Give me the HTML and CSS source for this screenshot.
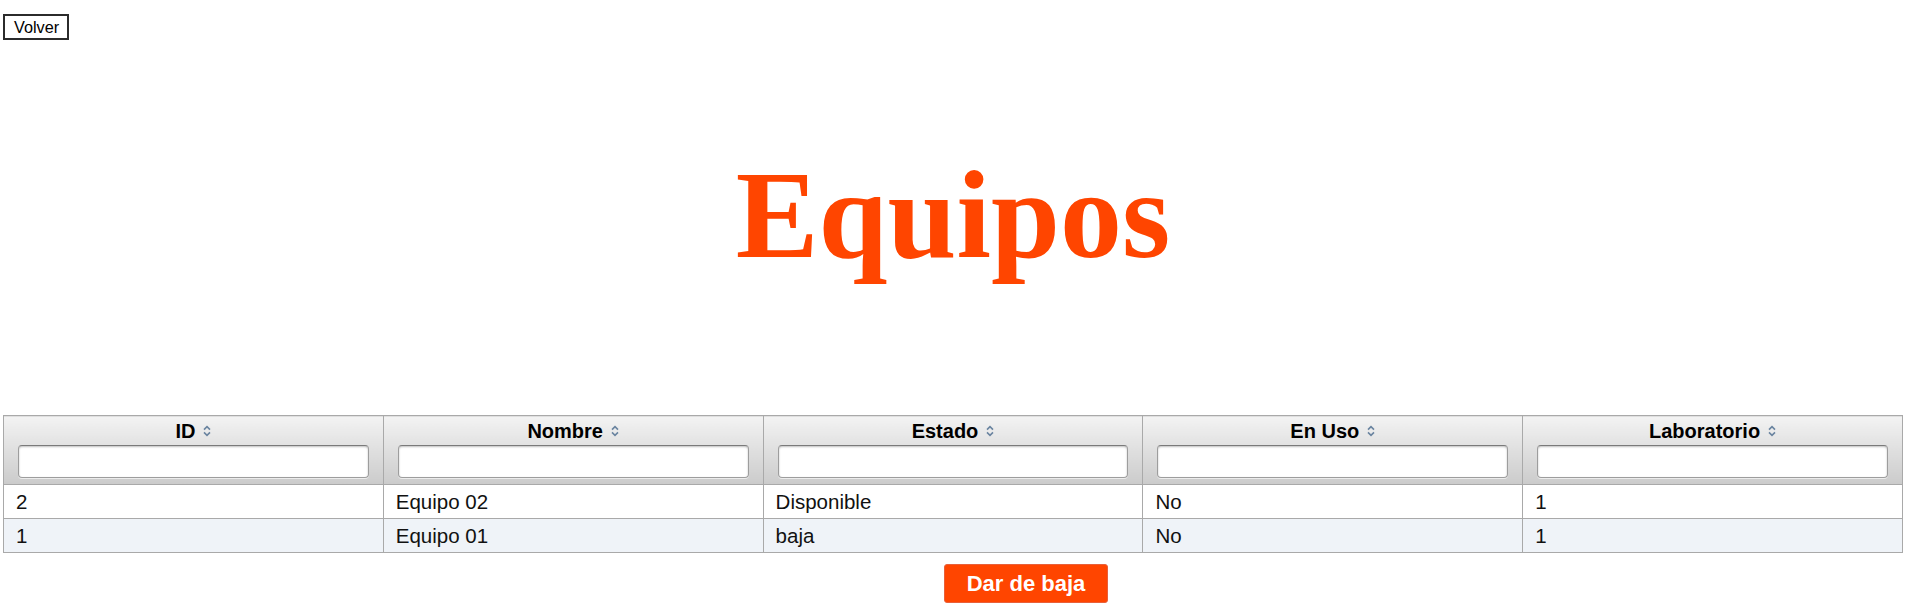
FILE: index.html
```html
<!DOCTYPE html>
<html lang="es">
<head>
<meta charset="utf-8">
<title>Equipos</title>
<link rel="stylesheet" href="styles.css">
</head>
<body>
<div class="page">
  <div class="top"><button class="back">Volver</button></div>
  <h1 class="title">Equipos</h1>
  <table class="grid">
    <thead>
      <tr>
        <th><div class="label">ID <svg class="sort" viewBox="0 0 8 12" width="8" height="12"><path d="M1 4.6 L4 1.6 L7 4.6 M1 7.4 L4 10.4 L7 7.4"/></svg></div><input type="text"></th>
        <th><div class="label">Nombre <svg class="sort" viewBox="0 0 8 12" width="8" height="12"><path d="M1 4.6 L4 1.6 L7 4.6 M1 7.4 L4 10.4 L7 7.4"/></svg></div><input type="text"></th>
        <th><div class="label">Estado <svg class="sort" viewBox="0 0 8 12" width="8" height="12"><path d="M1 4.6 L4 1.6 L7 4.6 M1 7.4 L4 10.4 L7 7.4"/></svg></div><input type="text"></th>
        <th><div class="label">En Uso <svg class="sort" viewBox="0 0 8 12" width="8" height="12"><path d="M1 4.6 L4 1.6 L7 4.6 M1 7.4 L4 10.4 L7 7.4"/></svg></div><input type="text"></th>
        <th><div class="label">Laboratorio <svg class="sort" viewBox="0 0 8 12" width="8" height="12"><path d="M1 4.6 L4 1.6 L7 4.6 M1 7.4 L4 10.4 L7 7.4"/></svg></div><input type="text"></th>
      </tr>
    </thead>
    <tbody>
      <tr><td>2</td><td>Equipo 02</td><td>Disponible</td><td>No</td><td>1</td></tr>
      <tr class="alt"><td>1</td><td>Equipo 01</td><td>baja</td><td>No</td><td>1</td></tr>
    </tbody>
  </table>
  <div class="actions"><button class="danger">Dar de baja</button></div>
</div>
</body>
</html>
```

FILE: styles.css
```css
html, body {
  margin: 0;
  padding: 0;
  background: #ffffff;
}

body {
  font-family: "Liberation Sans", Arial, sans-serif;
  color: #111;
}

.page {
  padding: 14px 10px 0 3px;
}

.top {
  height: 26px;
}

.back {
  font-family: "Liberation Sans", Arial, sans-serif;
  font-size: 16.26px;
  line-height: 18px;
  height: 26px;
  padding: 0 8px 1px 9px;
  background: #ffffff;
  color: #000;
  border: 2px solid #2b2b2b;
  border-radius: 0;
  margin: 0;
}

.title {
  font-family: "Liberation Serif", "Times New Roman", serif;
  font-weight: bold;
  font-size: 124px;
  line-height: 122px;
  color: #ff4500;
  text-align: center;
  margin: 115px 0 138px;
}

.grid {
  width: 100%;
  border-collapse: collapse;
  table-layout: fixed;
  border: 1px solid #a9a9a9;
}

.grid th {
  background: linear-gradient(#f3f3f3, #cbcbcb);
  border: 1px solid #a9a9a9;
  padding: 4px 14px 6px;
  font-size: 20px;
  font-weight: bold;
  color: #000;
}

.label {
  height: 22px;
  line-height: 22px;
  display: flex;
  justify-content: center;
  align-items: center;
  gap: 8px;
  margin-bottom: 3px;
}

.sort {
  fill: none;
  stroke: #6a84a0;
  stroke-width: 1.6;
}

.grid input {
  display: block;
  width: 100%;
  height: 33px;
  box-sizing: border-box;
  border: 1px solid #9d9d9d;
  border-top-color: #7a7a7a;
  border-radius: 4px;
  background: #fff;
  box-shadow: inset 0 1px 2px rgba(0, 0, 0, 0.25), 0 1px 0 rgba(255, 255, 255, 0.6);
  margin: 0;
}

.grid td {
  border: 1px solid #a9a9a9;
  height: 33px;
  padding: 0 12px;
  font-size: 20.5px;
  color: #111;
  background: #ffffff;
}

.grid tr.alt td {
  background: #eff3f8;
}

.actions {
  display: flex;
  justify-content: center;
  padding-left: 146px;
  margin-top: 11px;
}

.danger {
  font-family: "Liberation Sans", Arial, sans-serif;
  font-size: 22px;
  font-weight: bold;
  color: #fff;
  background: #ff4500;
  border: 1px solid #e8603a;
  border-radius: 3px;
  width: 164px;
  height: 39px;
  padding: 0;
  margin: 0;
}
```
